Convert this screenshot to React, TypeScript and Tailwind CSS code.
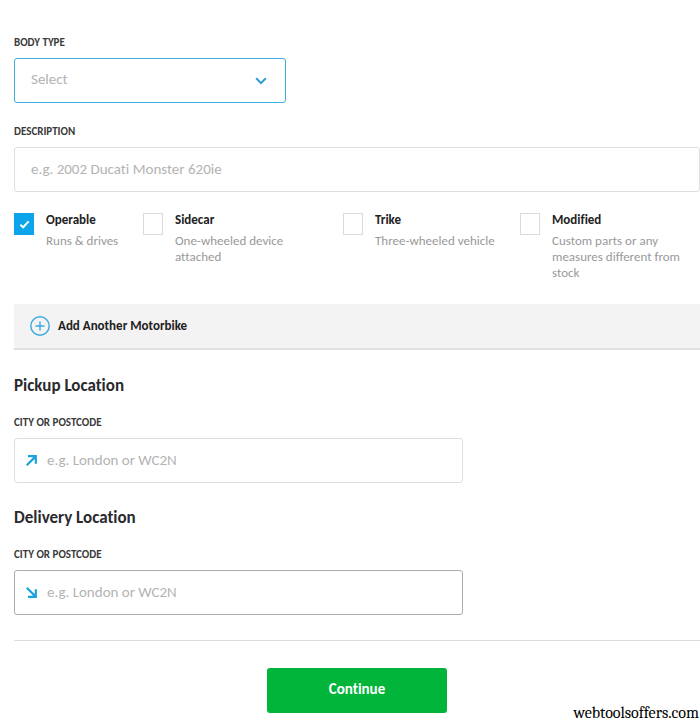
import { useState } from 'react';

const extras = [
  { id: 'operable', title: 'Operable', note: 'Runs & drives', checked: true },
  { id: 'sidecar', title: 'Sidecar', note: 'One-wheeled device attached', checked: false },
  { id: 'trike', title: 'Trike', note: 'Three-wheeled vehicle', checked: false },
  { id: 'modified', title: 'Modified', note: 'Custom parts or any measures different from stock', checked: false },
];

function Extra({ id, title, note, checked }: (typeof extras)[number]) {
  const [on, setOn] = useState(checked);
  return (
    <div className="flex items-start gap-3">
      <span className="mt-px grid shrink-0">
        <input
          id={id}
          type="checkbox"
          checked={on}
          onChange={(e) => setOn(e.target.checked)}
          className="col-start-1 row-start-1 h-[22px] w-5 appearance-none border border-[#dcdcdc] bg-white checked:border-[#0ca4ea] checked:bg-[#0ca4ea]"
        />
        {on && (
          <svg
            viewBox="0 0 12 10"
            className="pointer-events-none col-start-1 row-start-1 h-[9px] w-[11px] place-self-center"
            fill="none"
            stroke="white"
            strokeWidth="2.2"
          >
            <path d="M1.4 5.2 4.5 8.1 10.6 1.6" />
          </svg>
        )}
      </span>
      <label htmlFor={id} className="max-w-[132px] text-[13px] leading-4">
        <span className="mb-[5px] block font-semibold text-[#222]">{title}</span>
        <span className="block text-[#999]">{note}</span>
      </label>
    </div>
  );
}

type LocationProps = {
  id: string;
  title: string;
  arrow: string;
  active?: boolean;
};

function LocationField({ id, title, arrow, active }: LocationProps) {
  return (
    <section>
      <h2 className="text-[17px] leading-5 font-bold text-[#2a2a2e]">{title}</h2>
      <label htmlFor={id} className="mt-[19px] block text-[11px] leading-4 font-semibold text-[#3a3a3a]">
        CITY OR POSTCODE
      </label>
      <div
        className={`mt-[7px] flex h-[45px] w-full max-w-[449px] items-center gap-[10px] rounded-[3px] border px-[11px] ${
          active ? 'border-[#ababab]' : 'border-[#dedede]'
        }`}
      >
        <svg viewBox="0 0 11 11" className="h-[11px] w-[11px] shrink-0" fill="none" stroke="#1ba1dc" strokeWidth="2.2">
          <path d={arrow} />
        </svg>
        <input
          id={id}
          type="text"
          placeholder="e.g. London or WC2N"
          className="min-w-0 flex-1 text-[15px] outline-none placeholder:text-[#b3b3b3]"
        />
      </div>
    </section>
  );
}

export default function App() {
  return (
    <main className="relative min-h-screen bg-white pt-[35px] pb-1 pl-[14px] font-['Carlito','Lato',sans-serif] [font-variant-ligatures:none]">
      <form onSubmit={(e) => e.preventDefault()}>
        <label htmlFor="body-type" className="block text-[11px] leading-4 font-semibold text-[#3a3a3a]">
          BODY TYPE
        </label>
        <div className="relative mt-[7px] w-full max-w-[272px]">
          <select
            id="body-type"
            className="block h-[45px] w-full appearance-none rounded-[3px] border border-[#3bb0dc] bg-white px-4 pb-[2px] text-[15px] text-[#b3b3b3] outline-none"
          >
            <option>Select</option>
          </select>
          <svg
            viewBox="0 0 12 8"
            className="pointer-events-none absolute top-[19px] right-[19px] h-2 w-3"
            fill="none"
            stroke="#2f9bd3"
            strokeWidth="2"
          >
            <path d="M1.2 1.3 6 6.1 10.8 1.3" />
          </svg>
        </div>

        <label htmlFor="description" className="mt-[21px] block text-[11px] leading-4 font-semibold text-[#3a3a3a]">
          DESCRIPTION
        </label>
        <input
          id="description"
          type="text"
          placeholder="e.g. 2002 Ducati Monster 620ie"
          className="mt-[7px] block h-[45px] w-full rounded-[3px] border border-[#dedede] px-4 pb-[2px] text-[15px] outline-none placeholder:text-[#b3b3b3]"
        />

        <div className="mt-5 grid grid-cols-[129fr_200fr_177fr_180fr]">
          {extras.map((extra) => (
            <Extra key={extra.id} {...extra} />
          ))}
        </div>

        <button
          type="button"
          className="mt-[23px] flex h-[46px] w-full items-center gap-2 border-b-2 border-[#e0e0e0] bg-[#f3f3f3] px-4 text-[13px] font-semibold text-[#222]"
        >
          <svg viewBox="0 0 20 20" className="h-5 w-5" fill="none" stroke="#37a9e0" strokeWidth="1.4">
            <circle cx="10" cy="10" r="9.2" />
            <path d="M5.5 10h9M10 5.5v9" />
          </svg>
          Add Another Motorbike
        </button>

        <div className="mt-[26px] flex flex-col gap-[25px]">
          <LocationField id="pickup" title="Pickup Location" arrow="M0.8 10.2 9.6 1.4M2 1.2h7.8v7.6" />
          <LocationField id="delivery" title="Delivery Location" arrow="M0.8 0.8 9.6 9.6M9.8 2.2v7.6H2" active />
        </div>

        <div className="mt-[25px] flex justify-center border-t border-[#dcdcdc] pt-[27px]">
          <button type="submit" className="h-[45px] w-[180px] rounded-[3px] bg-[#00b539] pb-[2px] text-[15px] font-bold text-white">
            Continue
          </button>
        </div>
      </form>
      <p className="absolute right-px bottom-0 font-['Caladea','DejaVu_Serif_Condensed','DejaVu_Serif',serif] text-base leading-4 text-black">
        webtoolsoffers.com
      </p>
    </main>
  );
}
